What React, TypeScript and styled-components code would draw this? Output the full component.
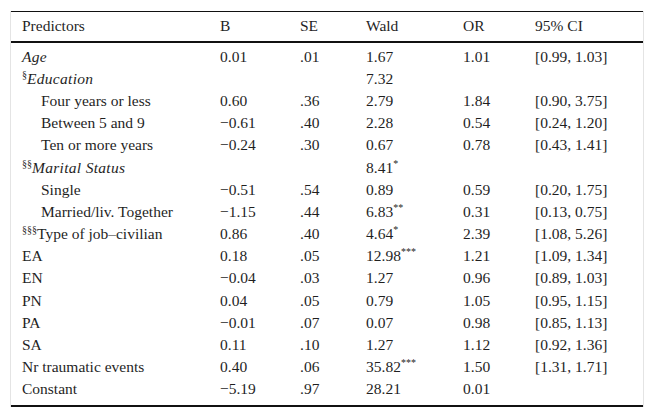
import * as React from 'react'
import styled, { createGlobalStyle } from 'styled-components'

const GlobalStyle = createGlobalStyle`
  body {
    margin: 0;
    background: #fff;
    font-family: "Liberation Serif", "Times New Roman", serif;
  }
`

const Frame = styled.div`
  width: 632px;
  margin: 11px 0 0 10px;
  border-left: 1px solid #e4e4e4;
  border-right: 1px solid #e4e4e4;
`

const Table = styled.table`
  width: 632px;
  border-collapse: collapse;
  table-layout: fixed;
  font-family: "Liberation Serif", "Times New Roman", serif;
  font-size: 15.5px;
  color: #1f1f1f;
  border-top: 1px solid #111;
  border-bottom: 2px solid #111;
`

const HeadRow = styled.tr`
  height: 30px;
  border-bottom: 2px solid #111;
`

const Th = styled.th<{ $first?: boolean }>`
  font-weight: normal;
  text-align: left;
  padding: 0 0 0 ${p => (p.$first ? '11px' : '0')};
  white-space: nowrap;
`

const Row = styled.tr<{ $pad?: 'top' | 'bottom' }>`
  height: ${p => (p.$pad === 'top' ? '26.2px' : p.$pad === 'bottom' ? '27.2px' : '22.2px')};
  td {
    padding-top: ${p => (p.$pad === 'top' ? '4px' : '0')};
    padding-bottom: ${p => (p.$pad === 'bottom' ? '5px' : '0')};
  }
`

const Td = styled.td<{ $indent?: boolean; $first?: boolean }>`
  text-align: left;
  white-space: nowrap;
  line-height: 18px;
  padding-left: ${p => (p.$indent ? '30px' : p.$first ? '11px' : '0')};
`

const Label = styled.span<{ $italic?: boolean }>`
  font-style: ${p => (p.$italic ? 'italic' : 'normal')};
  letter-spacing: ${p => (p.$italic ? '0.3px' : '0')};
`

const Sup = styled.sup`
  font-size: 10px;
  line-height: 0;
  vertical-align: 6px;
`

type Item = {
  label: string
  pre?: string
  italic?: boolean
  indent?: boolean
  b?: string
  se?: string
  wald?: string
  star?: string
  or?: string
  ci?: string
}

const rows: Item[] = [
  { label: 'Age', italic: true, b: '0.01', se: '.01', wald: '1.67', or: '1.01', ci: '[0.99, 1.03]' },
  { label: 'Education', pre: '§', italic: true, wald: '7.32' },
  { label: 'Four years or less', indent: true, b: '0.60', se: '.36', wald: '2.79', or: '1.84', ci: '[0.90, 3.75]' },
  { label: 'Between 5 and 9', indent: true, b: '−0.61', se: '.40', wald: '2.28', or: '0.54', ci: '[0.24, 1.20]' },
  { label: 'Ten or more years', indent: true, b: '−0.24', se: '.30', wald: '0.67', or: '0.78', ci: '[0.43, 1.41]' },
  { label: 'Marital Status', pre: '§§', italic: true, wald: '8.41', star: '*' },
  { label: 'Single', indent: true, b: '−0.51', se: '.54', wald: '0.89', or: '0.59', ci: '[0.20, 1.75]' },
  { label: 'Married/liv. Together', indent: true, b: '−1.15', se: '.44', wald: '6.83', star: '**', or: '0.31', ci: '[0.13, 0.75]' },
  { label: 'Type of job–civilian', pre: '§§§', b: '0.86', se: '.40', wald: '4.64', star: '*', or: '2.39', ci: '[1.08, 5.26]' },
  { label: 'EA', b: '0.18', se: '.05', wald: '12.98', star: '***', or: '1.21', ci: '[1.09, 1.34]' },
  { label: 'EN', b: '−0.04', se: '.03', wald: '1.27', or: '0.96', ci: '[0.89, 1.03]' },
  { label: 'PN', b: '0.04', se: '.05', wald: '0.79', or: '1.05', ci: '[0.95, 1.15]' },
  { label: 'PA', b: '−0.01', se: '.07', wald: '0.07', or: '0.98', ci: '[0.85, 1.13]' },
  { label: 'SA', b: '0.11', se: '.10', wald: '1.27', or: '1.12', ci: '[0.92, 1.36]' },
  { label: 'Nr traumatic events', b: '0.40', se: '.06', wald: '35.82', star: '***', or: '1.50', ci: '[1.31, 1.71]' },
  { label: 'Constant', b: '−5.19', se: '.97', wald: '28.21', or: '0.01' },
]

const App: React.FC = () => (
  <>
    <GlobalStyle />
    <Frame>
      <Table>
        <colgroup>
          <col style={{ width: 209 }} />
          <col style={{ width: 80 }} />
          <col style={{ width: 66 }} />
          <col style={{ width: 97 }} />
          <col style={{ width: 72 }} />
          <col />
        </colgroup>
        <thead>
          <HeadRow>
            <Th $first>Predictors</Th>
            <Th>B</Th>
            <Th>SE</Th>
            <Th>Wald</Th>
            <Th>OR</Th>
            <Th>95% CI</Th>
          </HeadRow>
        </thead>
        <tbody>
          {rows.map((r, i) => (
            <Row key={r.label} $pad={i === 0 ? 'top' : i === rows.length - 1 ? 'bottom' : undefined}>
              <Td $first $indent={r.indent}>
                {r.pre && <Sup>{r.pre}</Sup>}
                <Label $italic={r.italic}>{r.label}</Label>
              </Td>
              <Td>{r.b}</Td>
              <Td>{r.se}</Td>
              <Td>
                {r.wald}
                {r.star && <Sup>{r.star}</Sup>}
              </Td>
              <Td>{r.or}</Td>
              <Td>{r.ci}</Td>
            </Row>
          ))}
        </tbody>
      </Table>
    </Frame>
  </>
)

export default App
